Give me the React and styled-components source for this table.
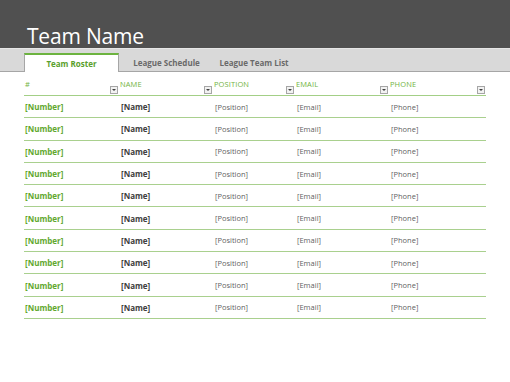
import React from "react";
import styled, { createGlobalStyle } from "styled-components";

const Global = createGlobalStyle`
  html, body { margin: 0; padding: 0; background: #ffffff; }
  body { font-family: "Open Sans", "Liberation Sans", sans-serif; }
`;

const Page = styled.div`
  width: 510px;
  height: 382px;
  background: #fff;
  overflow: hidden;
`;

const Banner = styled.header`
  height: 48px;
  background: #505050;
  display: flex;
  align-items: flex-end;
  padding-left: 27px;
  box-sizing: border-box;
`;

const Title = styled.h1`
  margin: 0 0 -1px 0;
  font-family: "Open Sans", sans-serif;
  font-weight: 400;
  font-size: 21px;
  line-height: 26px;
  color: #ffffff;
  letter-spacing: -0.2px;
`;

const TabBar = styled.nav`
  height: 24px;
  box-sizing: border-box;
  background: #d9d9d9;
  border-top: 1px solid #e6e6e6;
  border-bottom: 1px solid #a6a6a6;
  display: flex;
  align-items: flex-end;
  padding-left: 24px;
`;

const Tab = styled.div`
  width: ${(p) => p.$w}px;
  height: ${(p) => (p.$active ? 19 : 18)}px;
  box-sizing: border-box;
  display: flex;
  align-items: center;
  justify-content: center;
  font-family: "Open Sans", sans-serif;
  font-weight: 700;
  font-size: 8px;
  color: ${(p) => (p.$active ? "#5aa02c" : "#6a6a6a")};
  background: ${(p) => (p.$active ? "#ffffff" : "transparent")};
  border-top: ${(p) => (p.$active ? "2px solid #6cb33f" : "none")};
  border-left: ${(p) => (p.$active ? "1px solid #a6a6a6" : "none")};
  border-right: ${(p) => (p.$active ? "1px solid #a6a6a6" : "none")};
  margin-bottom: ${(p) => (p.$active ? "-1px" : "0")};
  padding-top: ${(p) => (p.$active ? "0" : "1px")};
`;

const Table = styled.div`
  margin-left: 24px;
  width: 462px;
`;

const cols = "95px 94px 82px 94px 97px";

const HeadRow = styled.div`
  display: grid;
  grid-template-columns: ${cols};
  height: 24px;
  box-sizing: border-box;
  border-bottom: 1px solid #a3cf86;
`;

const HeadCell = styled.div`
  position: relative;
  font-size: 7.5px;
  color: #74b443;
  padding: 7px 0 0 1px;
  letter-spacing: 0.1px;
`;

const Filter = styled.span`
  position: absolute;
  right: 1px;
  bottom: 1px;
  width: 8px;
  height: 8px;
  box-sizing: border-box;
  border: 1px solid #a6a6a6;
  background: #f2f2f2;
  display: flex;
  align-items: center;
  justify-content: center;
  &::after {
    content: "";
    border-left: 2px solid transparent;
    border-right: 2px solid transparent;
    border-top: 2px solid #404040;
  }
`;

const Row = styled.div`
  display: grid;
  grid-template-columns: ${cols};
  height: 22.3px;
  box-sizing: border-box;
  border-bottom: 1px solid #a9d08e;
  align-items: center;
`;

const Cell = styled.div`
  padding-left: ${(p) => (p.$first ? 1 : 2)}px;
  font-size: ${(p) => (p.$bold ? 8 : 7.5)}px;
  font-weight: ${(p) => (p.$bold ? 700 : 400)};
  color: ${(p) => p.$color || "#5f5f5f"};
  white-space: nowrap;
`;

const headers = ["#", "NAME", "POSITION", "EMAIL", "PHONE"];

export default function App() {
  const rows = Array.from({ length: 10 });
  return (
    <Page>
      <Global />
      <Banner>
        <Title>Team Name</Title>
      </Banner>
      <TabBar>
        <Tab $active $w={95}>Team Roster</Tab>
        <Tab $w={95}>League Schedule</Tab>
        <Tab $w={80}>League Team List</Tab>
      </TabBar>
      <Table>
        <HeadRow>
          {headers.map((h) => (
            <HeadCell key={h}>
              {h}
              <Filter />
            </HeadCell>
          ))}
        </HeadRow>
        {rows.map((_, i) => (
          <Row key={i}>
            <Cell $first $bold $color="#62a82f">[Number]</Cell>
            <Cell $bold $color="#404040">[Name]</Cell>
            <Cell>[Position]</Cell>
            <Cell>[Email]</Cell>
            <Cell>[Phone]</Cell>
          </Row>
        ))}
      </Table>
    </Page>
  );
}
